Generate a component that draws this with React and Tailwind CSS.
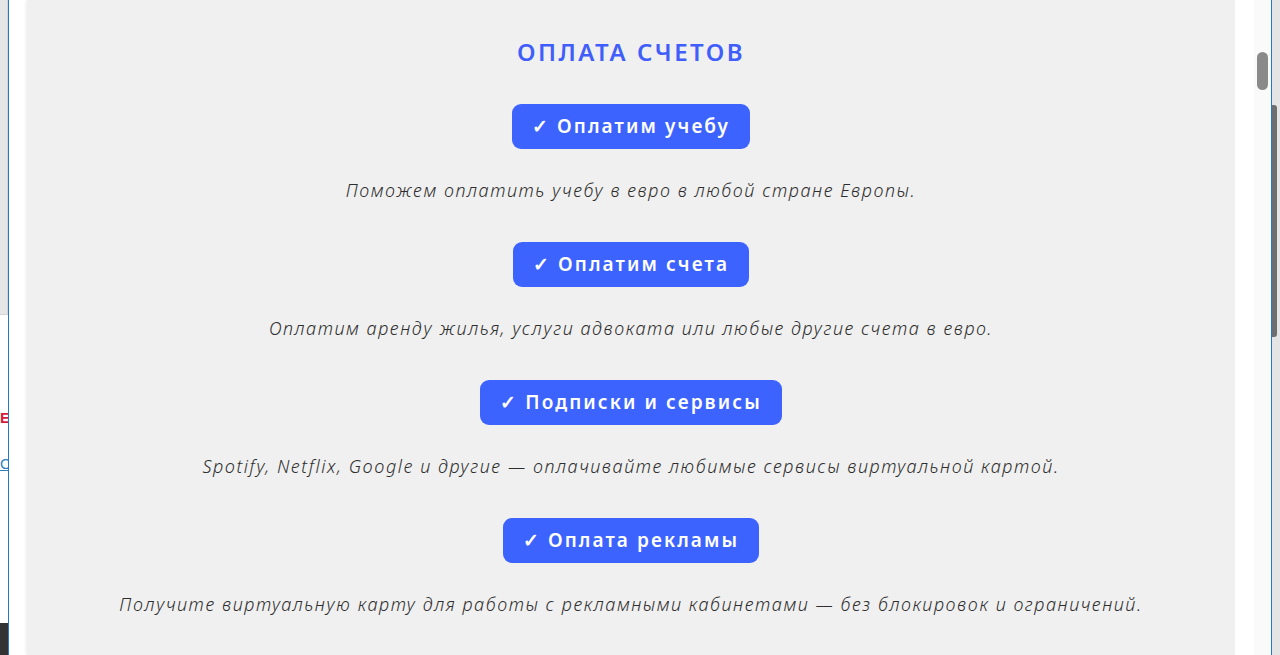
const items = [
  {
    title: 'Оплатим учебу',
    text: 'Поможем оплатить учебу в евро в любой стране Европы.',
  },
  {
    title: 'Оплатим счета',
    text: 'Оплатим аренду жилья, услуги адвоката или любые другие счета в евро.',
  },
  {
    title: 'Подписки и сервисы',
    text: 'Spotify, Netflix, Google и другие — оплачивайте любимые сервисы виртуальной картой.',
  },
  {
    title: 'Оплата рекламы',
    text: 'Получите виртуальную карту для работы с рекламными кабинетами — без блокировок и ограничений.',
  },
]

function LeftEdge() {
  return (
    <div className="flex w-[8px] shrink-0 flex-col overflow-hidden bg-white">
      <div className="h-[315px] border-r border-b border-[#d4d4d4] bg-[#e6e6e6]" />
      <div className="mt-[94px] text-[15px] leading-[18px] font-bold text-[#d81b3c] font-['Liberation_Sans',sans-serif]">
        E
      </div>
      <div className="mt-[28px] text-[15px] leading-[18px] text-[#2f7fc1] underline font-['Liberation_Sans',sans-serif]">
        O
      </div>
      <div className="flex-1" />
      <div className="h-[32px] bg-[#333333]" />
    </div>
  )
}

function Section() {
  return (
    <div className="flex w-[1208px] shrink-0 flex-col items-center bg-[#f0f0f0] pt-[36px] shadow-[0_0_4px_rgba(0,0,0,0.12)] font-['Noto_Sans',sans-serif]">
      <h2 className="text-[24px] leading-[32px] font-semibold tracking-[2.5px] text-[#3f5efb] uppercase">
        Оплата счетов
      </h2>
      <div className="mt-[36px] flex flex-col items-center">
        {items.map((item, i) => (
          <div key={item.title} className={`flex flex-col items-center ${i > 0 ? 'mt-[38px]' : ''}`}>
            <div className="flex h-[45px] items-center rounded-[9px] bg-[#3d63ff] px-[20px] text-[19px] font-semibold tracking-[2.1px] text-white">
              ✓ {item.title}
            </div>
            <p className="mt-[28px] text-[18px] leading-[27px] font-light italic text-[#2e2e2e] tracking-[1.55px]">
              {item.text}
            </p>
          </div>
        ))}
      </div>
    </div>
  )
}

function RightEdge() {
  return (
    <div className="flex shrink-0">
      <div className="w-[19px] bg-white" />
      <div className="relative w-[17px] bg-[#fafafa]">
        <div className="absolute top-[52px] left-[3px] h-[38px] w-[11px] rounded-full bg-[#8a8a8a]" />
      </div>
      <div className="w-px bg-[#1f78d1]" />
      <div className="relative w-[8px] bg-[#e4e4e4]">
        <div className="absolute top-[105px] left-0 h-[232px] w-[5px] rounded-r-[3px] bg-[#6e6e6e]" />
      </div>
    </div>
  )
}

export default function App() {
  return (
    <div className="flex h-[655px] w-[1280px] overflow-hidden bg-white">
      <LeftEdge />
      <div className="w-px shrink-0 bg-[#1f78d1]" />
      <div className="w-[18px] shrink-0 bg-white" />
      <Section />
      <RightEdge />
    </div>
  )
}
